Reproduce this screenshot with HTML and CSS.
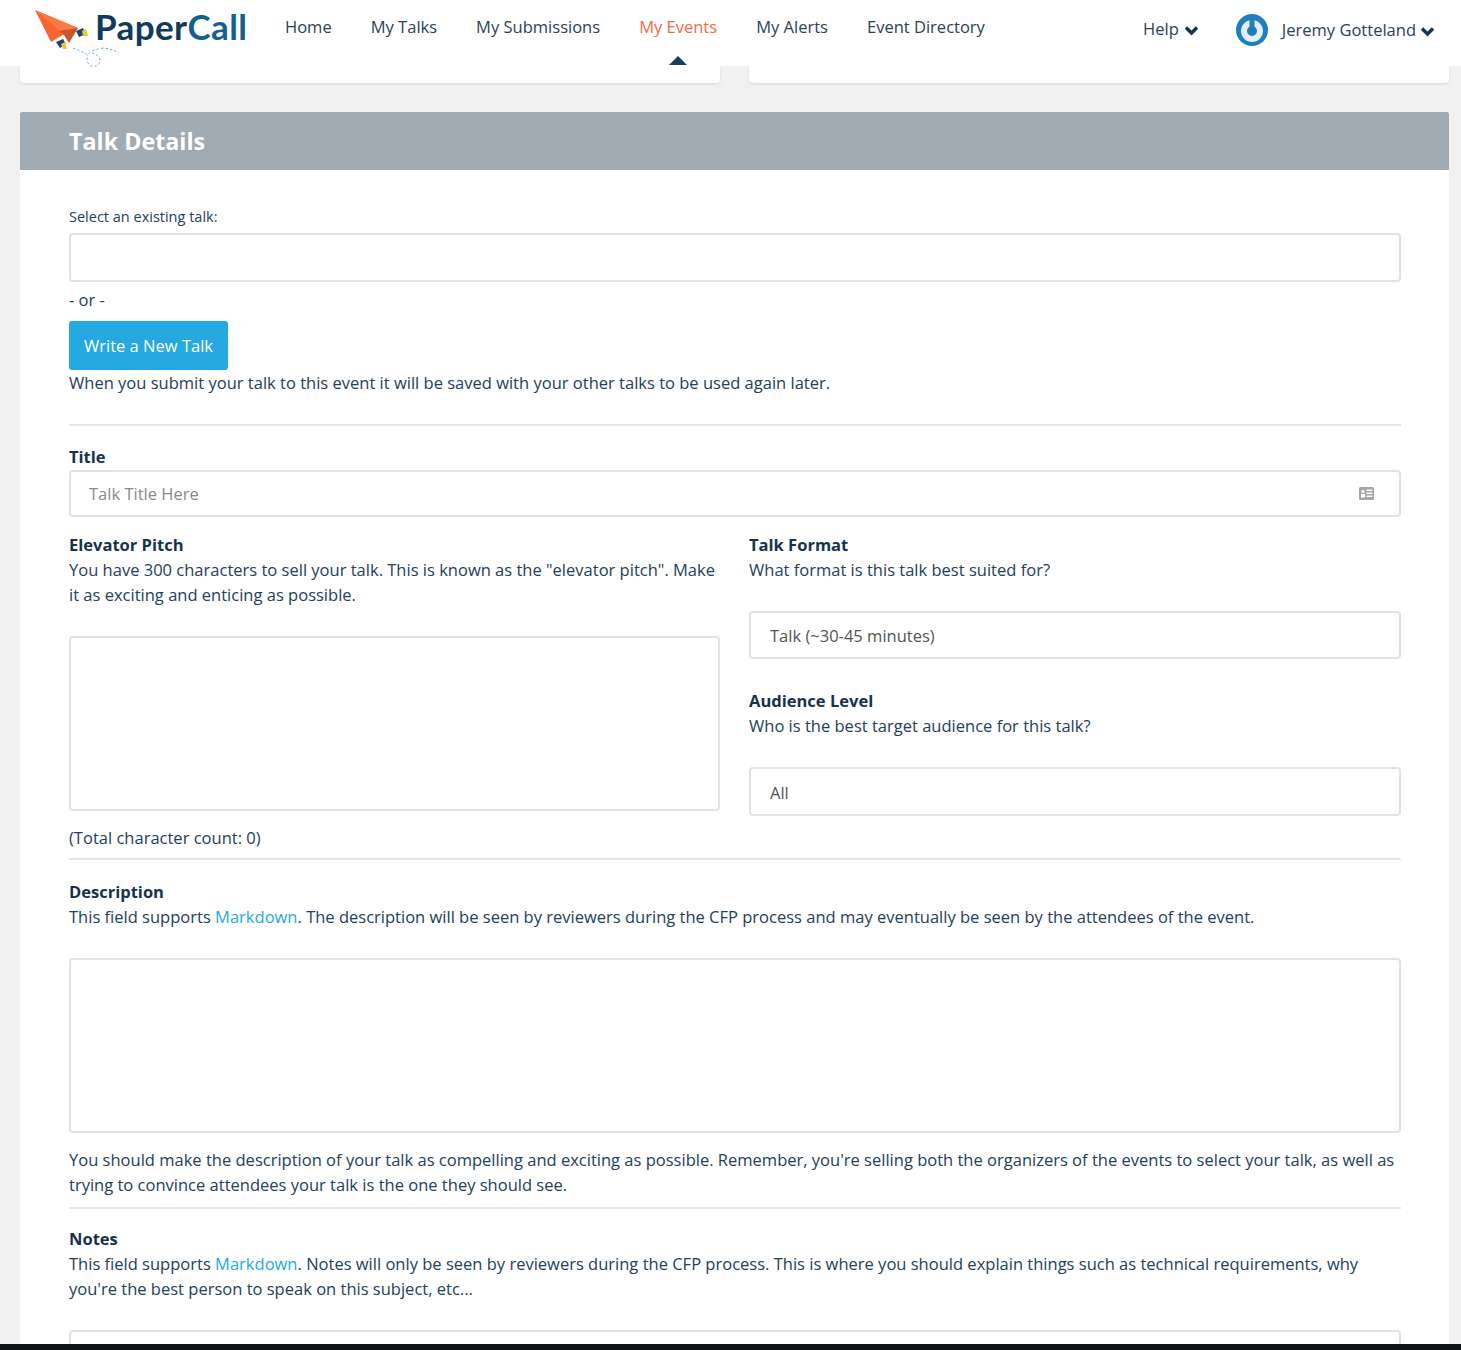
FILE: index.html
```html
<!DOCTYPE html>
<html lang="en">
<head>
    <meta charset="UTF-8">
    <title>PaperCall - Talk Details</title>
    <link rel="stylesheet" href="styles.css">
</head>
<body>
<div class="page">
    <header class="topbar">
        <a class="logo">
            <svg class="logo-plane" width="100" height="68" viewBox="0 0 100 68">
                <path d="M73 48 Q81 51 88 55 Q92 49 104 48 Q112 49 119 53" fill="none" stroke="#6fa8cf" stroke-width="1" stroke-dasharray="2.5 2"/>
                <path d="M92 53 Q101 56 100 62 Q97 68 91 66 Q85 62 88 55" fill="none" stroke="#6fa8cf" stroke-width="1" stroke-dasharray="2.5 2"/>
                <path d="M35 10 L51 42 L66 33 L78 28 Z" fill="#f9652d"/>
                <path d="M35 10 L78 28 L60 31 Z" fill="#fb7a45"/>
                <path d="M59 31 L78 28 L69 43 L64 35 Z" fill="#c9532a"/>
                <path d="M76 31 L83 28 L86 34 L79 37 Z" fill="#1d4666"/>
                <path d="M82 31 L86 29 L88 36 L83 36 Z" fill="#f5c51f"/>
                <path d="M56 42 L63 39 L66 44 L60 48 Z" fill="#1d4666"/>
                <path d="M61 44 L65 42 L67 49 L63 49 Z" fill="#f5c51f"/>
            </svg>
            <span class="logo-text">Paper<span class="logo-call">Call</span></span>
        </a>
        <nav class="nav">
            <a>Home</a>
            <a>My Talks</a>
            <a>My Submissions</a>
            <a class="active">My Events</a>
            <a>My Alerts</a>
            <a>Event Directory</a>
        </nav>
        <div class="help">Help
            <svg class="chev" width="15" height="11" viewBox="0 0 15 11"><path d="M2 2.5 L7.5 8 L13 2.5" fill="none" stroke="#17324d" stroke-width="3.4"/></svg>
        </div>
        <div class="user">
            <svg class="avatar" width="32" height="32" viewBox="0 0 32 32">
                <circle cx="16" cy="16" r="16" fill="#1f7fbd"/>
                <circle cx="16" cy="17" r="8" fill="none" stroke="#e6eef3" stroke-width="6"/>
                <rect x="13.5" y="4" width="5" height="13" rx="2" fill="#1f7fbd"/>
            </svg>
            <span>Jeremy Gotteland</span>
            <svg class="chev" width="15" height="11" viewBox="0 0 15 11"><path d="M2 2.5 L7.5 8 L13 2.5" fill="none" stroke="#17324d" stroke-width="3.4"/></svg>
        </div>
    </header>

    <div class="prev-cards">
        <div class="prev-card"></div>
        <div class="prev-card"></div>
    </div>

    <section class="panel">
        <h2 class="panel-title">Talk Details</h2>
        <div class="panel-body">
            <label class="small-label">Select an existing talk:</label>
            <div class="field existing"></div>
            <p class="or">- or -</p>
            <button class="btn">Write a New Talk</button>
            <p class="help-line">When you submit your talk to this event it will be saved with your other talks to be used again later.</p>
            <hr class="rule first-rule">

            <h4 class="field-title">Title</h4>
            <div class="field title-field">
                <span>Talk Title Here</span>
                <svg width="15" height="13" viewBox="0 0 15 13">
                    <rect width="15" height="13" rx="1.5" fill="#a5a5a5"/>
                    <circle cx="4" cy="4.5" r="1.7" fill="#fff"/>
                    <rect x="2" y="7" width="4" height="3.5" fill="#fff"/>
                    <rect x="7.5" y="2.5" width="6" height="1.5" fill="#fff"/>
                    <rect x="7.5" y="5.5" width="6" height="1.5" fill="#fff"/>
                    <rect x="7.5" y="8.5" width="6" height="1.5" fill="#fff"/>
                </svg>
            </div>

            <div class="two-col">
                <div class="col">
                    <h4 class="field-title">Elevator Pitch</h4>
                    <p>You have 300 characters to sell your talk. This is known as the "elevator pitch". Make it as exciting and enticing as possible.</p>
                    <div class="field pitch-area"></div>
                    <p class="count">(Total character count: 0)</p>
                </div>
                <div class="col">
                    <h4 class="field-title">Talk Format</h4>
                    <p>What format is this talk best suited for?</p>
                    <div class="field select-field format-field">Talk (~30-45 minutes)</div>
                    <h4 class="field-title audience-title">Audience Level</h4>
                    <p>Who is the best target audience for this talk?</p>
                    <div class="field select-field audience-field">All</div>
                </div>
            </div>
            <hr class="rule count-rule">

            <h4 class="field-title">Description</h4>
            <p>This field supports <a class="link">Markdown</a>. The description will be seen by reviewers during the CFP process and may eventually be seen by the attendees of the event.</p>
            <div class="field desc-area"></div>
            <p>You should make the description of your talk as compelling and exciting as possible. Remember, you're selling both the organizers of the events to select your talk, as well as trying to convince attendees your talk is the one they should see.</p>
            <hr class="rule desc-rule">

            <h4 class="field-title">Notes</h4>
            <p>This field supports <a class="link">Markdown</a>. Notes will only be seen by reviewers during the CFP process. This is where you should explain things such as technical requirements, why you're the best person to speak on this subject, etc...</p>
            <div class="field notes-area"></div>
        </div>
    </section>
</div>
<div class="footer-strip"></div>
</body>
</html>
```

FILE: styles.css
```css
* {
    box-sizing: border-box;
}

html, body {
    margin: 0;
    padding: 0;
}

body {
    background: #f1f1f1;
    color: #24405a;
    font-family: "Open Sans", sans-serif;
    font-size: 16.53px;
    line-height: 25px;
    height: 1350px;
    overflow: hidden;
}

.page {
    height: 1344px;
    overflow: hidden;
}

.footer-strip {
    height: 6px;
    background: #0e1413;
}

p {
    margin: 0;
}

/* top nav */
.topbar {
    height: 66px;
    background: #fff;
    display: flex;
    align-items: flex-start;
    position: relative;
}

.logo {
    display: flex;
    width: 285px;
    flex: none;
}

.logo-plane {
    flex: none;
    overflow: visible;
}

.logo-text {
    font-family: Lato, sans-serif;
    font-weight: 700;
    font-size: 35px;
    line-height: 53px;
    color: #0f3a5c;
    margin-left: -5px;
    letter-spacing: 0.4px;
}

.logo-call {
    color: #14608f;
}

.nav {
    display: flex;
    gap: 39px;
    line-height: 54px;
}

.nav a {
    color: #2b4257;
    position: relative;
}

.nav a.active {
    color: #f26b43;
}

.nav a.active::after {
    content: "";
    position: absolute;
    left: 50%;
    top: 56px;
    margin-left: -9px;
    border-left: 9px solid transparent;
    border-right: 9px solid transparent;
    border-bottom: 9px solid #123f63;
}

.help {
    margin-left: auto;
    display: flex;
    align-items: center;
    gap: 5px;
    height: 57px;
    color: #2b4257;
}

.user {
    display: flex;
    align-items: center;
    height: 59px;
    margin-left: 37px;
    margin-right: 26px;
    color: #2b4257;
}

.avatar {
    margin-right: 14px;
}

.user .chev {
    margin-left: 4px;
}

.chev {
    flex: none;
    margin-top: 3px;
}

/* bottoms of the cards scrolled under the nav */
.prev-cards {
    display: flex;
    gap: 29px;
    padding: 0 12px 0 20px;
    height: 17px;
}

.prev-card {
    flex: 1;
    background: #fff;
    border-radius: 0 0 4px 4px;
    box-shadow: 0 1px 3px rgba(0, 0, 0, 0.1);
}

/* panel */
.panel {
    margin: 29px 12px 0 20px;
    background: #fff;
}

.panel-title {
    margin: 0;
    height: 58px;
    background: #a0abb3;
    color: #fff;
    font-size: 23.3px;
    font-weight: 700;
    line-height: 58px;
    padding-left: 49px;
    border-radius: 2px 2px 0 0;
}

.panel-body {
    padding: 35px 48px 0 49px;
}

.small-label {
    display: block;
    font-size: 14.5px;
    line-height: 24px;
    margin-bottom: 4px;
}

.field {
    background: #fff;
    border: 2px solid #e2e2e2;
    border-radius: 4px;
}

.existing {
    height: 49px;
}

.or {
    margin: 5px 0 9px;
}

.btn {
    display: block;
    height: 49px;
    padding: 0 15px;
    background: #25a9e0;
    color: #fff;
    border: none;
    border-radius: 3px;
    font-family: inherit;
    font-size: 16.53px;
}

.rule {
    border: none;
    border-top: 2px solid #e6e6e6;
    margin: 0;
}

.first-rule {
    margin-top: 29px;
    margin-bottom: 18px;
}

.field-title {
    margin: 0;
    font-size: 16.53px;
    line-height: 25px;
    font-weight: 700;
    color: #17324d;
}

.title-field {
    height: 47px;
    margin-top: 1px;
    display: flex;
    align-items: center;
    justify-content: space-between;
    padding: 0 25px 0 18px;
    color: #8a8a8a;
}

.two-col {
    display: grid;
    grid-template-columns: 651px 652px;
    gap: 29px;
    margin-top: 15px;
}

.pitch-area {
    height: 175px;
    margin-top: 29px;
}

.count {
    margin-top: 14px;
}

.select-field {
    padding: 0 19px;
    display: flex;
    align-items: center;
    color: #555;
}

.format-field {
    height: 48px;
    margin-top: 29px;
}

.audience-title {
    margin-top: 29px;
}

.audience-field {
    height: 49px;
    margin-top: 29px;
    padding-top: 1px;
}

.count-rule {
    margin-top: 8px;
    margin-bottom: 19px;
}

.link {
    color: #25a9e0;
}

.desc-area {
    height: 175px;
    margin-top: 29px;
    margin-bottom: 14px;
}

.desc-rule {
    margin-top: 10px;
    margin-bottom: 17px;
}

.notes-area {
    height: 175px;
    margin-top: 29px;
}
```
